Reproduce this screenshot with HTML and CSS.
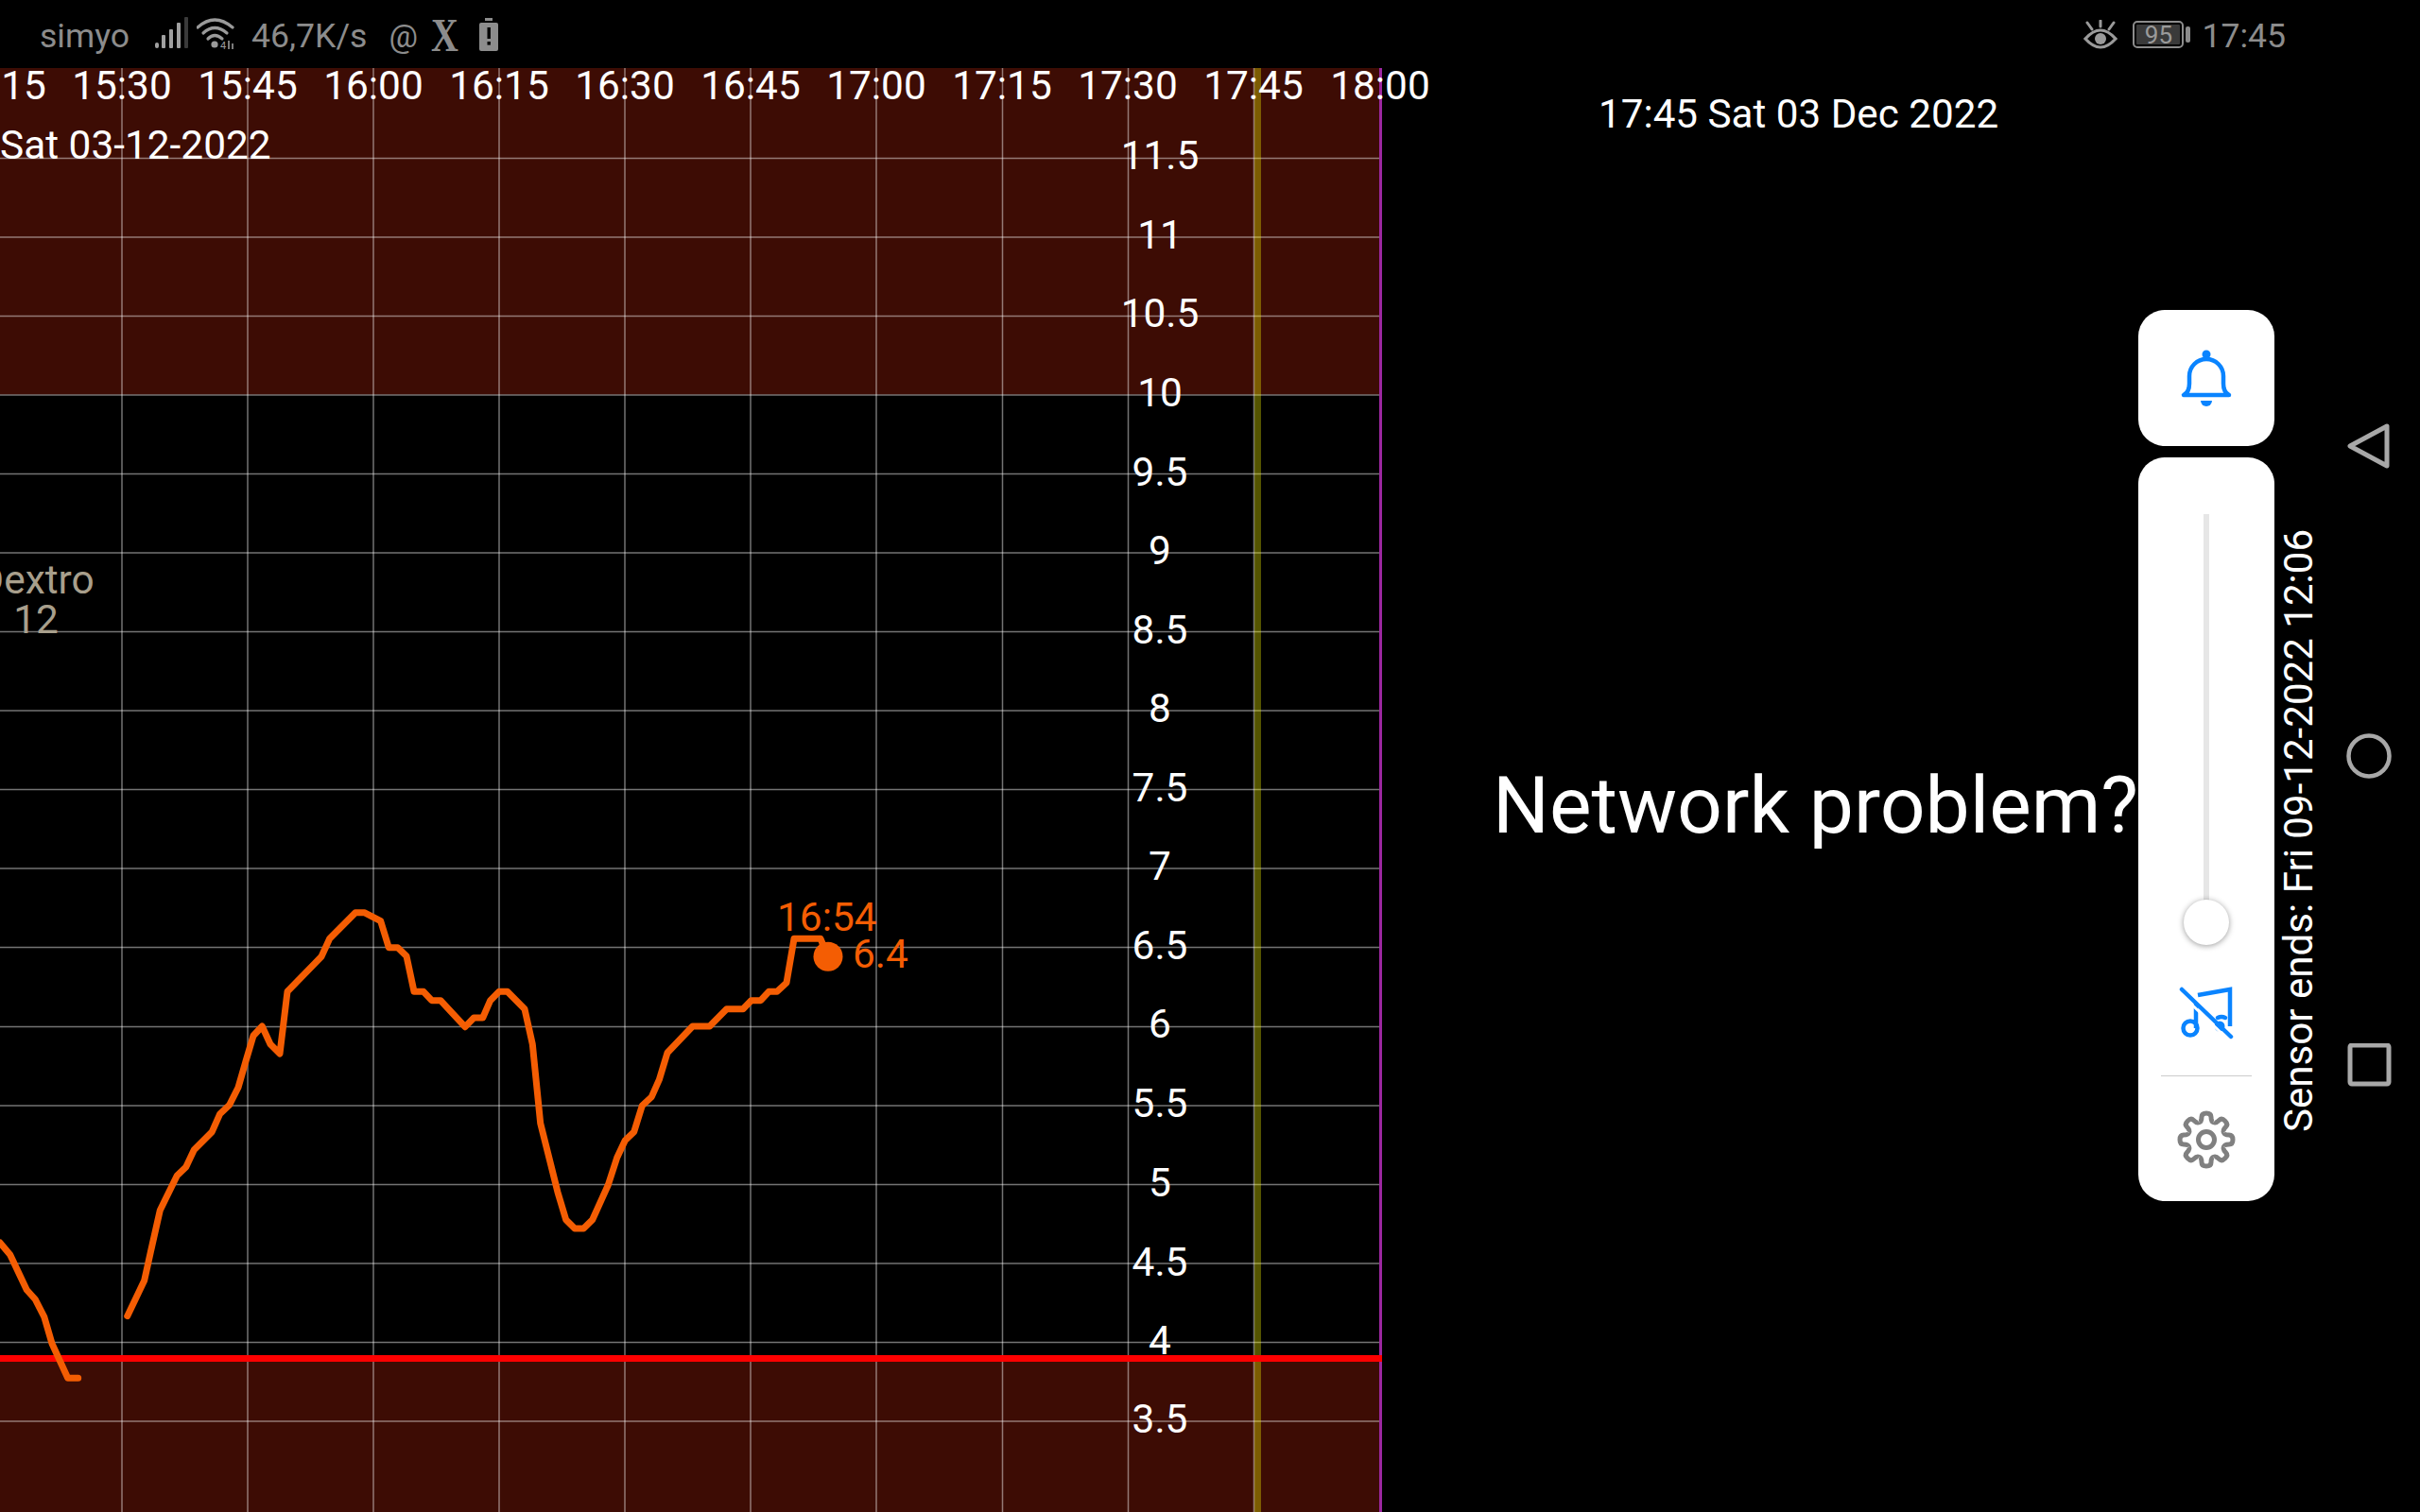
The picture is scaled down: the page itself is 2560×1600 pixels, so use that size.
FILE: index.html
```html
<!DOCTYPE html>
<html lang="en">
<head>
  <meta charset="UTF-8">
  <meta name="viewport" content="width=device-width, initial-scale=1.0">
  <title>Glucose chart</title>
  <link rel="stylesheet" href="styles.css">
</head>
<body>
  <!-- Status bar -->
  <header class="status-bar">
    <span class="carrier">simyo</span>
    <svg class="icon-signal" width="38" height="36" viewBox="0 0 38 36">
      <rect x="1" y="27" width="4" height="6" rx="2" fill="#a0a0a0"/>
      <rect x="8" y="19" width="4" height="14" rx="1" fill="#a0a0a0"/>
      <rect x="16" y="13" width="4" height="20" rx="1" fill="#a0a0a0"/>
      <rect x="24" y="6" width="4" height="27" rx="1" fill="#a0a0a0"/>
      <rect x="32" y="0" width="4" height="33" rx="1" fill="#3a3a3a"/>
    </svg>
    <svg class="icon-wifi" width="40" height="36" viewBox="0 0 40 36">
      <g fill="none" stroke="#9a9a9a" stroke-width="3.2" stroke-linecap="round">
        <path d="M1 11 Q19 -5 38 11"/>
        <path d="M7 17 Q19 6 32 17"/>
        <path d="M12 23 Q19 16 27 23"/>
      </g>
      <circle cx="19" cy="29" r="3.6" fill="#9a9a9a"/>
      <text class="wifi-four" x="25" y="34">4</text>
      <path d="M34 25 V34 M38 28 V34" stroke="#9a9a9a" stroke-width="1.6"/>
    </svg>
    <span class="net-speed">46,7K/s</span>
    <span class="at-sign">@</span>
    <span class="x-mark">X</span>
    <svg class="icon-alert" width="20" height="35" viewBox="0 0 20 35">
      <rect x="6" y="0" width="8" height="3" fill="#8c8c8c"/>
      <rect x="0" y="5" width="20" height="30" rx="2" fill="#8c8c8c"/>
      <rect x="8.5" y="10" width="3.4" height="12" fill="#000"/>
      <rect x="8.5" y="25" width="3.4" height="3.6" fill="#000"/>
    </svg>
    <span class="spacer"></span>
    <svg class="icon-eye" width="36" height="32" viewBox="0 0 36 32">
      <path d="M2 20 Q18 2 34 20 Q18 38 2 20Z" fill="none" stroke="#9a9a9a" stroke-width="3.2"/>
      <circle cx="18" cy="20" r="6" fill="#9a9a9a"/>
      <path d="M18 1 V7 M4 3 L9 10 M32 3 L27 10" stroke="#9a9a9a" stroke-width="3" stroke-linecap="round"/>
    </svg>
    <div class="battery">
      <span class="battery-level">95</span>
    </div>
    <span class="battery-tip"></span>
    <span class="clock">17:45</span>
  </header>

  <main class="main">
    <!-- Chart, drawn in page coordinates -->
    <svg class="chart" width="1462" height="1528" viewBox="0 72 1462 1528">
      <rect class="high-zone" x="0" y="72" width="1460" height="345.5"/>
      <rect class="high-zone" x="0" y="1438" width="1460" height="162"/>
      <path class="grid" d="M129 72V1600 M262 72V1600 M395 72V1600 M528 72V1600 M661 72V1600 M794 72V1600 M927 72V1600 M1060.5 72V1600 M1193.5 72V1600 M1326.5 72V1600"/>
      <path class="grid" d="M0 167.5H1460 M0 251H1460 M0 334.5H1460 M0 418H1460 M0 501.5H1460 M0 585H1460 M0 668.5H1460 M0 752H1460 M0 835.5H1460 M0 919H1460 M0 1002.5H1460 M0 1086.5H1460 M0 1170H1460 M0 1253.5H1460 M0 1337H1460 M0 1420.5H1460 M0 1504H1460"/>
      <rect class="now-band" x="1327" y="72" width="7" height="1528"/>
      <rect class="right-edge" x="1459" y="72" width="3" height="1528"/>
      <rect class="low-line" x="0" y="1434" width="1462" height="7"/>

      <g class="axis-x">
        <text x="-4" y="105">15:15</text>
        <text x="129" y="105">15:30</text>
        <text x="262" y="105">15:45</text>
        <text x="395" y="105">16:00</text>
        <text x="528" y="105">16:15</text>
        <text x="661" y="105">16:30</text>
        <text x="794" y="105">16:45</text>
        <text x="927" y="105">17:00</text>
        <text x="1060" y="105">17:15</text>
        <text x="1193" y="105">17:30</text>
        <text x="1326" y="105">17:45</text>
        <text x="1460" y="105">18:00</text>
      </g>
      <text class="chart-date" x="0" y="168">Sat 03-12-2022</text>

      <g class="axis-y">
        <text x="1227" y="179">11.5</text>
        <text x="1227" y="263">11</text>
        <text x="1227" y="346">10.5</text>
        <text x="1227" y="430">10</text>
        <text x="1227" y="514">9.5</text>
        <text x="1227" y="597">9</text>
        <text x="1227" y="681">8.5</text>
        <text x="1227" y="764">8</text>
        <text x="1227" y="848">7.5</text>
        <text x="1227" y="931">7</text>
        <text x="1227" y="1015">6.5</text>
        <text x="1227" y="1098">6</text>
        <text x="1227" y="1182">5.5</text>
        <text x="1227" y="1266">5</text>
        <text x="1227" y="1350">4.5</text>
        <text x="1227" y="1433">4</text>
        <text x="1227" y="1516">3.5</text>
      </g>

      <g class="treatment">
        <text x="38" y="628">Dextro</text>
        <text x="38" y="670">12</text>
      </g>

      <path class="curve" d="M0 1315L10.7 1327.7L28.3 1365L37.3 1375L46.7 1393.3L55 1421.7L71.7 1458.3L82.7 1458.3"/>
      <path class="curve" d="M134.7 1392.7L152.7 1355L159.3 1325L169.3 1280.7L187.3 1244L196.7 1235L205.3 1216.7L224.3 1197.7L232.7 1178.7L242.7 1169.3L252 1150.7L260 1123L268 1096L277.3 1086L286 1105L296 1115L304 1049.3L340 1012.3L348.7 993.3L376 965.7L385.3 965.7L402.7 974.7L411.3 1002.7L420.7 1002.7L430 1011.7L438 1049.3L448 1049.3L456.7 1058.7L466 1058.7L492 1086.7L501.3 1077L510.7 1077L518.7 1058.7L528 1049.3L536.7 1049.3L555 1067.7L563.3 1105L571.7 1188.7L590 1261.7L598.7 1290.7L608 1300L617.3 1300L626.7 1290.7L643.3 1254L652.7 1225L661.3 1206.7L670.7 1197.7L679.3 1170L689.3 1160.7L697.3 1142.7L706 1114L732.7 1086L750.7 1086L768.7 1067.7L786 1067.7L794.7 1058.7L804.7 1058.7L813.3 1049.3L822 1049.3L832 1040L840 993.3L868 993.3L876 1012.3"/>
      <circle class="curve-dot" cx="876" cy="1012.3" r="15.5"/>
      <text class="reading" x="822" y="985">16:54</text>
      <text class="reading" x="902" y="1024">6.4</text>
    </svg>

    <!-- Clock and error message -->
    <section class="info">
      <div class="info-time">17:45 Sat 03 Dec 2022</div>
      <div class="info-message">Network problem?</div>
    </section>

    <!-- Volume panel -->
    <section class="volume">
      <div class="volume-card bell-card">
        <svg width="60" height="64" viewBox="0 0 60 64">
          <circle cx="30" cy="7" r="4.5" fill="#0a84ff"/>
          <path d="M6 50 H54 Q48 47 48 38 V30 A18 18 0 0 0 12 30 V38 Q12 47 6 50Z" fill="none" stroke="#0a84ff" stroke-width="4.5" stroke-linejoin="round"/>
          <path d="M24 56 H36 A6 6 0 0 1 24 56Z" fill="#0a84ff"/>
        </svg>
      </div>
      <div class="volume-card slider-card">
        <div class="slider-track">
          <span class="slider-thumb"></span>
        </div>
        <svg class="icon-mute" width="60" height="60" viewBox="0 0 60 60">
          <g fill="none" stroke="#0a84ff" stroke-width="4.5">
            <circle cx="13" cy="44" r="7.5"/>
            <path d="M19 44 V18"/>
            <path d="M21 9 L55 3 V42"/>
            <path d="M50 33 Q46 31 42 33" stroke-linecap="round"/>
            <circle cx="44" cy="42" r="5.5" fill="#0a84ff" stroke="none"/>
            <path d="M4 3 L56 53" stroke="#fff" stroke-width="3" transform="translate(-3 3)"/>
            <path d="M4 3 L56 53" stroke-linecap="round"/>
          </g>
        </svg>
        <div class="slider-divider"></div>
        <svg class="icon-gear" width="64" height="64" viewBox="-32 -32 64 64">
          <defs>
            <path id="tooth" d="M-7.65 -18.5 Q-5 -19 -5 -24 Q-5 -28 0 -28 Q5 -28 5 -24 Q5 -19 7.65 -18.5"/>
          </defs>
          <g fill="none" stroke="#808080" stroke-width="5">
            <use href="#tooth"/>
            <use href="#tooth" transform="rotate(45)"/>
            <use href="#tooth" transform="rotate(90)"/>
            <use href="#tooth" transform="rotate(135)"/>
            <use href="#tooth" transform="rotate(180)"/>
            <use href="#tooth" transform="rotate(225)"/>
            <use href="#tooth" transform="rotate(270)"/>
            <use href="#tooth" transform="rotate(315)"/>
            <circle r="8.5"/>
          </g>
        </svg>
      </div>
    </section>

    <div class="sensor">Sensor ends: Fri 09-12-2022 12:06</div>

    <!-- Navigation buttons -->
    <nav class="nav-buttons">
      <svg width="48" height="48" viewBox="0 0 48 48">
        <path d="M43 3 L4 24 L43 45Z" fill="none" stroke="#a8a8a8" stroke-width="5" stroke-linejoin="round"/>
      </svg>
      <svg width="48" height="48" viewBox="0 0 48 48">
        <circle cx="24" cy="24" r="21.5" fill="none" stroke="#a8a8a8" stroke-width="4.5"/>
      </svg>
      <svg width="48" height="48" viewBox="0 0 48 48">
        <rect x="4" y="2" width="41" height="41" rx="2" fill="none" stroke="#a8a8a8" stroke-width="5"/>
      </svg>
    </nav>
  </main>
</body>
</html>
```
FILE: styles.css
```css
body {
  margin: 0;
  width: 2560px;
  height: 1600px;
  overflow: hidden;
  background-color: #000;
  color: #fff;
  font-family: Roboto, "Liberation Sans", sans-serif;
}

/* Status bar */
.status-bar {
  display: flex;
  align-items: center;
  height: 72px;
  padding-left: 42px;
  padding-top: 3px;
  box-sizing: border-box;
  color: #8c8c8c;
  font-size: 35.6px;
}
.icon-signal {
  margin-left: 26px;
  margin-top: -3px;
}
.icon-wifi {
  margin-left: 7px;
  margin-top: -3px;
}
.wifi-four {
  font-size: 11px;
  fill: #9a9a9a;
}
.net-speed {
  margin-left: 18px;
}
.at-sign {
  margin-left: 23px;
  font-size: 34px;
}
.x-mark {
  display: inline-block;
  margin-left: 14px;
  font-family: "Liberation Serif", serif;
  font-size: 50px;
  font-weight: bold;
  line-height: 50px;
  margin-top: -1px;
  transform: scaleX(0.8);
  transform-origin: left center;
  width: 30px;
}
.icon-alert {
  margin-left: 21px;
  margin-top: -3px;
}
.spacer {
  flex: 1;
}
.icon-eye {
  margin-top: -1px;
}
.battery {
  display: flex;
  align-items: center;
  justify-content: center;
  box-sizing: border-box;
  width: 54px;
  height: 29px;
  margin-left: 16px;
  margin-top: -2px;
  border: 2px solid #8c8c8c;
  border-radius: 5px;
  padding: 2px;
  background-clip: content-box;
  background-color: #3a3a3a;
}
.battery-level {
  font-size: 26px;
  line-height: 22px;
  color: #9a9a9a;
}
.battery-tip {
  width: 5px;
  height: 17px;
  margin-left: 2px;
  margin-top: -2px;
  border-radius: 2px;
  background-color: #8c8c8c;
}
.clock {
  margin-left: 12px;
  margin-right: 142px;
}

/* Main row */
.main {
  display: flex;
  height: 1528px;
}
.chart {
  flex: none;
  overflow: visible;
  font-size: 42.4px;
}
.chart text {
  fill: #fff;
}
.high-zone {
  fill: #3d0c04;
}
.grid {
  fill: none;
  stroke: rgba(255, 255, 255, 0.45);
  stroke-width: 1.5;
}
.now-band {
  fill: rgba(255, 255, 0, 0.33);
}
.right-edge {
  fill: #9c27a0;
}
.low-line {
  fill: #ff0000;
}
.axis-x text,
.axis-y text,
.treatment text {
  text-anchor: middle;
}
.chart .treatment text {
  fill: #a89f8c;
}
.curve {
  fill: none;
  stroke: #f45d03;
  stroke-width: 7;
  stroke-linejoin: round;
  stroke-linecap: round;
}
.curve-dot {
  fill: #f45d03;
}
.chart .reading {
  fill: #f45d03;
}

/* Clock and message */
.info {
  flex: none;
  width: 800px;
}
.info-time {
  margin-top: 24px;
  margin-left: 229px;
  font-size: 42.2px;
  line-height: 50px;
}
.info-message {
  margin-top: 657px;
  margin-left: 117px;
  font-size: 84px;
  line-height: 100px;
  white-space: nowrap;
}

/* Volume panel */
.volume {
  flex: none;
  display: flex;
  flex-direction: column;
  gap: 12px;
  width: 144px;
  padding-top: 256px;
}
.volume-card {
  display: flex;
  flex-direction: column;
  align-items: center;
  background-color: #fff;
}
.bell-card {
  justify-content: center;
  height: 144px;
  border-radius: 28px;
}
.slider-card {
  height: 787px;
  border-radius: 28px;
}
.slider-track {
  position: relative;
  width: 6px;
  height: 432px;
  margin-top: 60px;
  background-color: #e6e6e6;
}
.slider-thumb {
  position: absolute;
  left: -21px;
  bottom: -24px;
  width: 48px;
  height: 48px;
  border-radius: 50%;
  background-color: #fff;
  box-shadow: 0 1px 6px rgba(0, 0, 0, 0.4);
}
.icon-mute {
  margin-top: 68px;
}
.slider-divider {
  width: 96px;
  height: 1px;
  margin-top: 34px;
  background-color: #ccc;
}
.icon-gear {
  margin-top: 35px;
}

.sensor {
  flex: none;
  box-sizing: border-box;
  height: 1126px;
  margin-left: 1px;
  writing-mode: vertical-rl;
  transform: rotate(180deg);
  font-size: 42.1px;
  line-height: 50px;
  white-space: nowrap;
}

/* Navigation */
.nav-buttons {
  flex: none;
  display: flex;
  flex-direction: column;
  gap: 280px;
  margin-left: 25px;
  padding-top: 376px;
}
```
